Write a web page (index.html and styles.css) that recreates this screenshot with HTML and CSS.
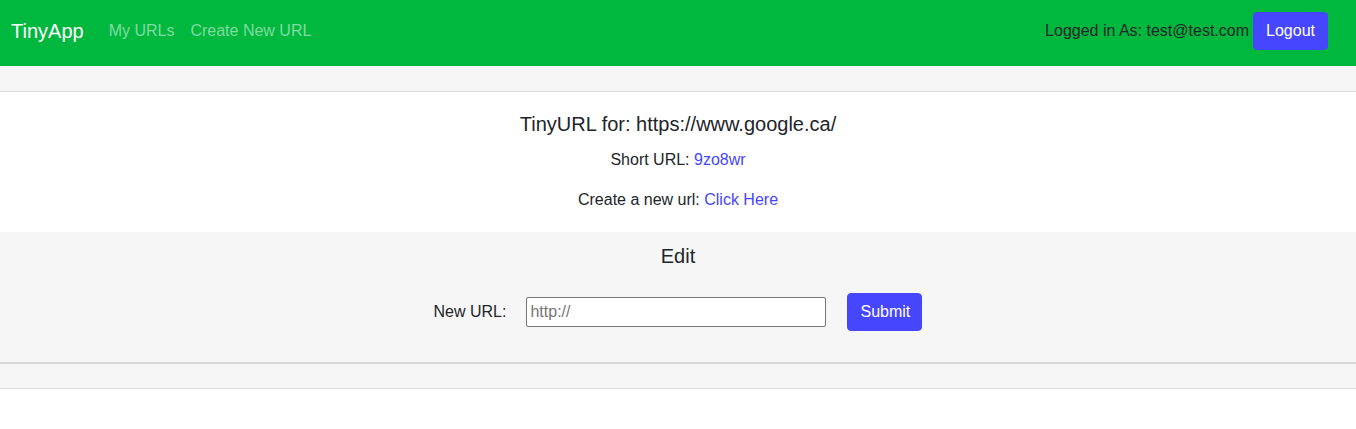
FILE: index.html
```html
<!DOCTYPE html>
<html>
<head>
<meta charset="utf-8">
<link rel="stylesheet" href="styles.css">
</head>
<body>
<nav class="navbar">
  <a class="brand" href="#">TinyApp</a>
  <div class="nav-links">
    <a class="nav-link" href="#">My URLs</a>
    <a class="nav-link" href="#">Create New URL</a>
  </div>
  <div class="nav-right">
    <span class="logged">Logged in As: test@test.com</span>
    <button class="btn">Logout</button>
  </div>
</nav>
<div class="band"></div>
<main class="details">
  <h2 class="title">TinyURL for: https://www.google.ca/</h2>
  <p class="line first">Short URL: <a href="#">9zo8wr</a></p>
  <p class="line second">Create a new url: <a href="#">Click Here</a></p>
</main>
<section class="edit">
  <h3 class="title">Edit</h3>
  <form class="edit-form">
    <label class="label">New URL:</label>
    <input class="input" type="text" placeholder="http://">
    <button class="btn submit" type="button">Submit</button>
  </form>
</section>
<div class="footer-band"></div>
</body>
</html>
```
FILE: styles.css
```css
* { box-sizing: border-box; }
html, body { margin: 0; padding: 0; }
body {
  font-family: "Liberation Sans", Arial, sans-serif;
  font-size: 16px;
  line-height: 24px;
  color: #212529;
  background: #fff;
}
a { text-decoration: none; color: #4646ff; }
.navbar {
  height: 66px;
  background: #00b83e;
  display: flex;
  align-items: center;
  padding: 0 28px 5px 11px;
}
.brand {
  color: #fff;
  font-size: 20px;
  line-height: 30px;
  margin-right: 17px;
}
.nav-links { display: flex; }
.nav-link {
  color: rgba(255,255,255,0.5);
  padding: 0 8px;
}
.nav-right {
  margin-left: auto;
  display: flex;
  align-items: center;
  gap: 4px;
}
.logged { color: #212529; }
.btn {
  font-family: inherit;
  font-size: 16px;
  line-height: 24px;
  height: 38px;
  padding: 6px 12px;
  width: 75px;
  color: #fff;
  background: #4646ff;
  border: 1px solid #4646ff;
  border-radius: 4px;
}
.nav-right .btn { margin-top: 1px; }
.band {
  height: 26px;
  background: #f6f6f6;
  border-bottom: 1px solid #dcdcdc;
}
.details {
  display: flex;
  flex-direction: column;
  align-items: center;
  padding: 20px 0 20px;
  background: #fff;
}
.title {
  margin: 0;
  font-size: 20px;
  line-height: 24px;
  font-weight: 400;
}
.line { margin: 0; }
.line.first { margin-top: 12px; }
.line.second { margin-top: 16px; }
.edit {
  background: #f6f6f6;
  display: flex;
  flex-direction: column;
  align-items: center;
  padding: 12px 0 31px;
  border-bottom: 2px solid #d8d8d8;
}
.edit-form {
  margin-top: 25px;
  display: flex;
  align-items: center;
  gap: 20px;
}
.submit { margin-left: 1px; }
.input {
  width: 300px;
  height: 30px;
  margin-top: -1px;
  border: 1px solid #767676;
  border-radius: 2px;
  font-family: inherit;
  font-size: 16px;
  padding: 1px 3px;
  background: #fff;
}
.input::placeholder { color: #757575; }
.footer-band {
  height: 25px;
  background: #f6f6f6;
  border-bottom: 1px solid #dcdcdc;
}
```
